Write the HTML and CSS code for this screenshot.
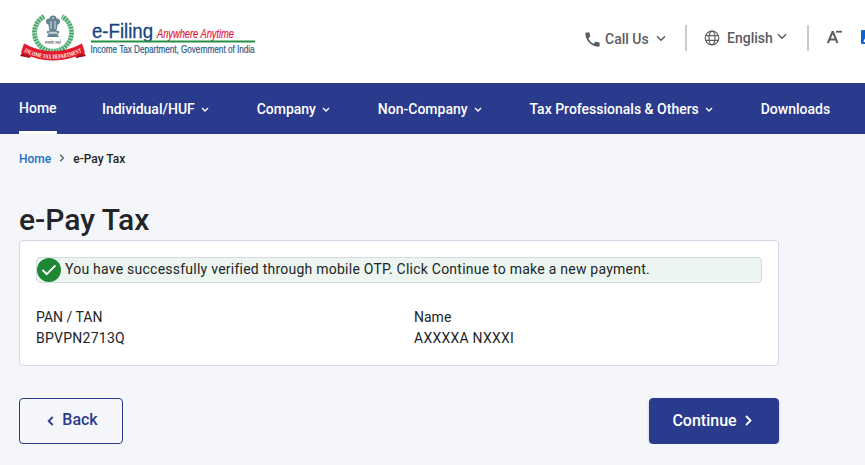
FILE: index.html
```html
<!DOCTYPE html>
<html lang="en">
<head>
    <meta charset="UTF-8">
    <meta name="viewport" content="width=device-width, initial-scale=1.0">
    <title>e-Pay Tax</title>
    <link rel="stylesheet" href="styles.css">
</head>
<body>
    <header class="header">
        <svg class="logo" width="238" height="52" viewBox="0 0 238 52">
            <!-- Wreath, open at the top -->
            <path d="M24 3.500A18.500 18.500 0 1 0 42 3.500" fill="none" stroke="#b5dcbf" stroke-width="5"/>
            <path d="M24 3.500A18.500 18.500 0 1 0 42 3.500" fill="none" stroke="#43a56c" stroke-width="4.500" stroke-dasharray="1.700 1.200"/>
            <!-- Emblem -->
            <g fill="#66828f">
                <circle cx="33" cy="6" r="3.600"/>
                <circle cx="29" cy="8.500" r="3"/>
                <circle cx="37" cy="8.500" r="3"/>
                <path d="M28 9h10l-1.500 9h-7z"/>
                <path d="M27 18h12v2.500H27zM28.500 21h9l1.500 3H27z"/>
            </g>
            <path d="M31 8v8M35 8v8M33 4v2M29 19.300h8" stroke="#dbe7ea" stroke-width="1"/>
            <text x="25" y="30.500" class="motto" textLength="16" lengthAdjust="spacingAndGlyphs">सत्यमेव जयते</text>
            <!-- Ribbon -->
            <path d="M0 43l6-9 6 5-2 6zM66 43l-6-9-6 5 2 6z" fill="#a90f1c"/>
            <path d="M4 30.500Q33 46 62 30.500l3 9Q33 55.500 1 39.500z" fill="#e31b2d"/>
            <path id="ribbon" d="M4 38.800Q33 52.500 62 38.800" fill="none"/>
            <text class="ribbon-text"><textPath href="#ribbon" textLength="60" lengthAdjust="spacingAndGlyphs">INCOME TAX DEPARTMENT</textPath></text>
            <text x="72" y="24.500" class="logo-name" textLength="61" lengthAdjust="spacingAndGlyphs">e-Filing</text>
            <text x="137" y="24.500" class="logo-slogan" textLength="77" lengthAdjust="spacingAndGlyphs">Anywhere Anytime</text>
            <path d="M71 28.500h164" stroke="#249044" stroke-width="2"/>
            <text x="70.500" y="40" class="logo-dept" textLength="164" lengthAdjust="spacingAndGlyphs">Income Tax Department, Government of India</text>
        </svg>
        <div class="tools">
            <svg class="phone" width="19" height="19" viewBox="0 0 24 24" fill="#5b5d60"><path d="M6.620 10.790a15.150 15.150 0 0 0 6.590 6.590l2.200-2.200a1 1 0 0 1 1.020-.240 11.400 11.400 0 0 0 3.570.570 1 1 0 0 1 1 1V20a1 1 0 0 1-1 1A17 17 0 0 1 3 4a1 1 0 0 1 1-1h3.500a1 1 0 0 1 1 1c0 1.250.200 2.450.570 3.570a1 1 0 0 1-.250 1.020z"/></svg>
            <span class="call">Call Us</span>
            <svg class="arrow" width="10" height="7" viewBox="0 0 10 7"><path d="M1 1.200l4 4 4-4"/></svg>
            <span class="divider"></span>
            <svg class="globe" width="16" height="16" viewBox="0 0 16 16"><circle cx="8" cy="8" r="6.800"/><ellipse cx="8" cy="8" rx="3" ry="6.800"/><path d="M1.800 5.600h12.400M1.800 10.400h12.400"/></svg>
            <span class="lang">English</span>
            <svg class="arrow lang-arrow" width="10" height="7" viewBox="0 0 10 7"><path d="M1 1.200l4 4 4-4"/></svg>
            <span class="divider"></span>
            <svg class="font-size" width="16" height="14" viewBox="0 0 16 14"><path d="M.900 13L5.400 2h.600l4.500 11M2.500 9.500h6.400" fill="none" stroke="#5b5d60" stroke-width="2"/><path d="M9 1.700h6" stroke="#5b5d60" stroke-width="1.800"/></svg>
            <svg class="font-normal" width="20" height="14" viewBox="0 0 20 14"><rect width="20" height="14" rx="1" fill="#0d66cc"/><path d="M3 12L8 2h1l5 10M5 9h7" fill="none" stroke="#fff" stroke-width="1.500"/></svg>
        </div>
    </header>

    <nav class="nav">
        <a class="nav-home" href="#">Home</a>
        <a href="#">Individual/HUF <svg width="8" height="6" viewBox="0 0 8 6"><path d="M1 1l3 3 3-3"/></svg></a>
        <a href="#">Company <svg width="8" height="6" viewBox="0 0 8 6"><path d="M1 1l3 3 3-3"/></svg></a>
        <a href="#">Non-Company <svg width="8" height="6" viewBox="0 0 8 6"><path d="M1 1l3 3 3-3"/></svg></a>
        <a href="#">Tax Professionals &amp; Others <svg width="8" height="6" viewBox="0 0 8 6"><path d="M1 1l3 3 3-3"/></svg></a>
        <a href="#">Downloads</a>
    </nav>

    <main class="main">
        <div class="breadcrumb">
            <a href="#">Home</a>
            <svg width="6" height="8" viewBox="0 0 6 8"><path d="M1.200 .800L4.400 4 1.200 7.200"/></svg>
            <span>e-Pay Tax</span>
        </div>

        <h1>e-Pay Tax</h1>

        <section class="card">
            <div class="success">
                <svg width="24" height="24" viewBox="0 0 24 24"><circle cx="12" cy="12" r="12" fill="#1e8635"/><path d="M5.500 12l4.200 4.200 8.800-8.800" fill="none" stroke="#fff" stroke-width="1.800"/></svg>
                <span>You have successfully verified through mobile OTP. Click Continue to make a new payment.</span>
            </div>
            <div class="details">
                <div>
                    <div class="label">PAN / TAN</div>
                    <div>BPVPN2713Q</div>
                </div>
                <div>
                    <div class="label">Name</div>
                    <div>AXXXXA NXXXI</div>
                </div>
            </div>
        </section>

        <div class="buttons">
            <button class="btn btn-back"><svg width="7" height="10" viewBox="0 0 7 10"><path d="M5.700 1L1.700 5l4 4"/></svg><span>Back</span></button>
            <button class="btn btn-continue"><span>Continue</span><svg width="7" height="11" viewBox="0 0 7 11"><path d="M1 1l4.500 4.500L1 10"/></svg></button>
        </div>
    </main>
</body>
</html>
```

FILE: styles.css
```css
body {
    margin: 0;
    background-color: #f5f6fa;
    color: #212529;
    font-family: Roboto, sans-serif;
    font-size: 14px;
    overflow: hidden;
}
a {
    text-decoration: none;
}

/* Header */
.header {
    display: flex;
    height: 83px;
    background-color: #fff;
    overflow: hidden;
}
.logo {
    flex: none;
    margin: 13px 0 0 20px;
    overflow: visible;
}
.motto {
    font-family: "Noto Sans", sans-serif;
    font-size: 4.500px;
    fill: #335;
}
.ribbon-text {
    font-family: "Liberation Serif", serif;
    font-size: 6px;
    font-weight: bold;
    fill: #fff;
}
.logo-name {
    font-family: "Liberation Sans", sans-serif;
    font-size: 20px;
    fill: #184481;
    stroke: #184481;
    stroke-width: 0.300px;
}
.logo-slogan {
    font-family: "Liberation Sans", sans-serif;
    font-size: 12px;
    font-style: italic;
    fill: #e3173e;
    stroke: #e3173e;
    stroke-width: 0.200px;
}
.logo-dept {
    font-family: "Liberation Sans", sans-serif;
    font-size: 10px;
    fill: #2a5a8c;
    stroke: #2a5a8c;
    stroke-width: 0.200px;
}
.tools {
    display: flex;
    align-items: center;
    flex: none;
    height: 76px;
    margin-left: 325px;
    color: #5b5d60;
    font-weight: 500;
}
.phone {
    margin-top: 2px;
}
.call {
    width: 45px;
    margin: 2px 6px 0 3px;
    white-space: nowrap;
}
.lang {
    width: 47px;
    margin: 0 3px 0 7px;
}
.arrow,
.globe {
    fill: none;
    stroke: #5b5d60;
    stroke-width: 1.500;
}
.globe {
    margin-left: -1px;
    stroke-width: 1.200;
}
.lang-arrow {
    margin: -4px 1px 0 0;
}
.divider {
    width: 2px;
    height: 26px;
    margin: 0 18px 0 19px;
    background-color: #cbcbcb;
}
.font-size {
    margin-top: -2px;
}
.font-normal {
    margin: -2px 0 0 18px;
}

/* Navigation */
.nav {
    display: flex;
    gap: 47.400px;
    height: 51px;
    padding-left: 19px;
    background-color: #2a3a8c;
    line-height: 51px;
    white-space: nowrap;
}
.nav a {
    color: #fff;
    font-weight: 500;
    padding-top: 1px;
}
.nav .nav-home {
    height: 48px;
    margin-right: -2px;
    padding-top: 0;
    border-bottom: 3px solid #fff;
}
.nav svg {
    position: relative;
    top: -1px;
    margin-left: 3px;
    fill: none;
    stroke: #fff;
    stroke-width: 1.300;
}

/* Content */
.main {
    width: 760px;
    margin-left: 19px;
}
.breadcrumb {
    display: flex;
    align-items: center;
    height: 14px;
    padding-top: 18px;
    font-size: 12px;
    font-weight: 500;
}
.breadcrumb a {
    color: #1c6fc4;
}
.breadcrumb svg {
    margin: -2px 8px 0;
    fill: none;
    stroke: #5b5d60;
    stroke-width: 1.300;
}
h1 {
    margin: 35px 0 2px;
    font-size: 30px;
    font-weight: 500;
    line-height: 37px;
}
.card {
    box-sizing: border-box;
    height: 126px;
    padding: 16px;
    border: 1px solid #d5d7e5;
    border-radius: 4px;
    background-color: #fff;
}
.success {
    display: flex;
    align-items: center;
    gap: 4px;
    height: 24px;
    border: 1px solid #d3dce0;
    border-radius: 4px;
    background-color: #ecf5ef;
    letter-spacing: 0.240px;
}
.success span {
    padding-bottom: 2px;
}
.details {
    display: grid;
    grid-template-columns: 378px 1fr;
    margin-top: 24px;
    letter-spacing: 0.250px;
    line-height: 21px;
}
.label {
    letter-spacing: 0;
}

/* Buttons */
.buttons {
    display: flex;
    justify-content: space-between;
    margin-top: 32px;
}
.btn {
    display: flex;
    align-items: center;
    justify-content: center;
    box-sizing: border-box;
    height: 46px;
    padding: 0 0 2px;
    border: 1px solid #2a3a8c;
    border-radius: 4px;
    font-family: Roboto, sans-serif;
    font-size: 16px;
    font-weight: 500;
}
.btn svg {
    fill: none;
    stroke: currentColor;
    stroke-width: 1.800;
}
.btn-back {
    gap: 8px;
    width: 104px;
    padding: 0 0 4px 3px;
    background-color: transparent;
    color: #2a3a8c;
}
.btn-back svg {
    margin-top: 4px;
}
.btn-continue {
    gap: 8px;
    width: 130px;
    padding-right: 4px;
    background-color: #2a3a8c;
    box-shadow: 0 1px 3px rgba(0, 0, 0, 0.2);
    color: #fff;
}
.btn-continue svg {
    margin-top: 1px;
}
```
